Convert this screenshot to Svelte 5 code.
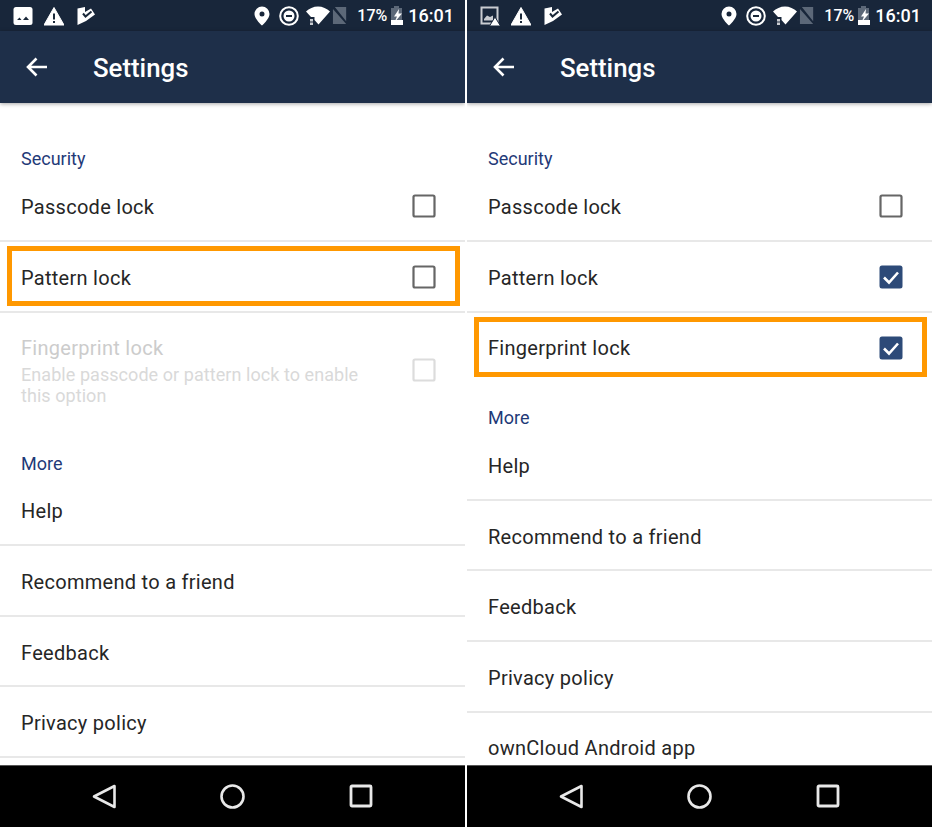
<script>
	const screens = [
		{
			firstIcon: 'image',
			groups: [
				{
					title: 'Security',
					items: [
						{ label: 'Passcode lock', check: 'off' },
						{ label: 'Pattern lock', check: 'off', marked: true },
						{
							label: 'Fingerprint lock',
							check: 'off',
							disabled: true,
							hint: 'Enable passcode or pattern lock to enable this option'
						}
					]
				},
				{
					title: 'More',
					items: [
						{ label: 'Help' },
						{ label: 'Recommend to a friend' },
						{ label: 'Feedback' },
						{ label: 'Privacy policy' }
					]
				}
			]
		},
		{
			firstIcon: 'image-alert',
			groups: [
				{
					title: 'Security',
					items: [
						{ label: 'Passcode lock', check: 'off' },
						{ label: 'Pattern lock', check: 'on' },
						{ label: 'Fingerprint lock', check: 'on', marked: true }
					]
				},
				{
					title: 'More',
					items: [
						{ label: 'Help' },
						{ label: 'Recommend to a friend' },
						{ label: 'Feedback' },
						{ label: 'Privacy policy' },
						{ label: 'ownCloud Android app' }
					]
				}
			]
		}
	];
</script>

<div class="screens">
	{#each screens as screen}
		<section class="phone">
			<div class="status">
				<div class="status-left">
					{#if screen.firstIcon === 'image'}
						<svg class="i20" viewBox="0 0 20 20">
							<rect x="0.5" y="1" width="19" height="18" rx="2.5" fill="#fff" />
							<path d="M4 14l2.5-2.6L8.5 14zM10 14l3-3.4L16 14z" fill="#1a2839" />
						</svg>
					{:else}
						<svg class="i20" viewBox="0 0 20 20">
							<rect x="1.5" y="1.5" width="16" height="16" fill="none" stroke="#c9ccd1" stroke-width="2" />
							<path d="M4 13l3-3.500 3 1.500 3-1.500v5H4z" fill="#c9ccd1" />
							<path d="M15 11l5.500 9h-11z" fill="#fff" stroke="#18263a" />
						</svg>
					{/if}
					<svg class="i20 warn" viewBox="0 0 20 20">
						<path d="M10 1.500L20 19H0z" fill="#fff" stroke="#fff" stroke-linejoin="round" />
						<path d="M9 7.500h2v6H9zM9 15h2v2H9z" fill="#1a2839" />
					</svg>
					<svg class="flag" viewBox="0 0 18 20">
						<path d="M0.500 2.500L8 1v5L14 2.500 18 8.500 9 15 0.500 19z" fill="#fff" />
						<path d="M6 7.500l2.500 3L14.500 5.500" fill="none" stroke="#1a2839" stroke-width="2" />
					</svg>
				</div>
				<div class="status-right">
					<svg class="pin" viewBox="0 0 16 20">
						<path fill-rule="evenodd" d="M8 0.500a7.500 7.500 0 0 0-7.500 7.500C.5 13 8 19.500 8 19.500S15.500 13 15.500 8A7.500 7.500 0 0 0 8 .5zm0 5a2.500 2.500 0 1 1 0 5 2.500 2.500 0 0 1 0-5z" fill="#fff" />
					</svg>
					<svg class="dnd" viewBox="0 0 20 20">
						<circle cx="10" cy="10" r="8.800" fill="none" stroke="#fff" stroke-width="2" />
						<circle cx="10" cy="10" r="5.500" fill="#fff" />
						<rect x="7" y="9" width="6" height="2" fill="#1a2839" />
					</svg>
					<svg class="wifi" viewBox="0 0 24 19">
						<path d="M0 5.500C3 2.500 7.500.5 12 .5s9 2 12 5L12.500 18.500l-4-4.500V11H5z" fill="#fff" />
						<path d="M4 13h3v2.500H4zM4 16.500h3V19H4z" fill="#c9ccd1" />
					</svg>
					<svg class="sim" viewBox="0 0 18 19">
						<path d="M3 .5h12v15zM1 2.500L15 18.500H1z" fill="#5c6878" />
					</svg>
					<span class="percent">17%</span>
					<svg class="battery" viewBox="0 0 13 20">
						<path d="M4 0h5v2h3v12H1V2h3z" fill="#5c6878" />
						<path d="M9 3L4 10.500h3l-1.500 3.500H1v5h12v-5H6.500L12 7.500H8.500z" fill="#fff" />
					</svg>
					<span class="clock">16:01</span>
				</div>
			</div>

			<header class="appbar">
				<svg class="back" viewBox="0 0 22 20" aria-hidden="true">
					<path d="M22 10H3M11.500 1.500L3 10l8.500 8.500" fill="none" stroke="#fff" stroke-width="2.600" />
				</svg>
				<h1>Settings</h1>
			</header>

			<main class="content">
				{#each screen.groups as group}
					<h2>{group.title}</h2>
					<ul>
						{#each group.items as item}
							<li class:disabled={item.disabled} class:tall={item.hint}>
								<div class="text">
									<span class="label">{item.label}</span>
									{#if item.hint}<span class="hint">{item.hint}</span>{/if}
								</div>
								{#if item.check === 'on'}
									<svg class="check" viewBox="0 0 24 24">
										<rect x="0.500" y="0.500" width="23" height="23" rx="2.500" fill="#2d4a78" />
										<path d="M5 12.500l5 5 9-10" fill="none" stroke="#fff" stroke-width="2.600" />
									</svg>
								{:else if item.check === 'off'}
									<svg class="check" viewBox="0 0 24 24">
										<rect x="1.500" y="1.500" width="21" height="21" rx="1.500" fill="none" stroke="currentColor" stroke-width="2.200" />
									</svg>
								{/if}
								{#if item.marked}<div class="mark"></div>{/if}
							</li>
						{/each}
					</ul>
				{/each}
			</main>

			<nav class="navbar">
				<svg viewBox="0 0 25 25">
					<path d="M22.500 2v21L2 12.500z" fill="none" stroke="#e8e8e8" stroke-width="2.600" stroke-linejoin="round" />
				</svg>
				<svg viewBox="0 0 25 25">
					<circle cx="12.500" cy="12.500" r="11" fill="none" stroke="#e8e8e8" stroke-width="2.600" />
				</svg>
				<svg viewBox="0 0 25 25">
					<rect x="3" y="2" width="20" height="20" rx="1" fill="none" stroke="#e8e8e8" stroke-width="2.800" />
				</svg>
			</nav>
		</section>
	{/each}
</div>

<style>
	:global(body) {
		background: #fff;
	}

	.screens {
		display: flex;
		gap: 2px;
		width: 932px;
		height: 827px;
		font-family: Roboto, "Liberation Sans", sans-serif;
	}

	.phone {
		display: flex;
		flex-direction: column;
		width: 465px;
		height: 827px;
		overflow: hidden;
	}

	.status {
		display: flex;
		align-items: center;
		justify-content: space-between;
		flex: none;
		height: 31px;
		padding: 0 11px 0 13px;
		box-sizing: border-box;
		background: #18263a;
		color: #fff;
	}

	.status-left,
	.status-right {
		display: flex;
		align-items: center;
	}

	.i20 {
		width: 20px;
		height: 20px;
	}

	.warn {
		margin-left: 11px;
	}

	.flag {
		width: 18px;
		height: 20px;
		margin-left: 13px;
	}

	.pin {
		width: 16px;
		height: 20px;
	}

	.dnd {
		width: 20px;
		height: 20px;
		margin-left: 9px;
	}

	.wifi {
		width: 24px;
		height: 19px;
		margin-left: 7px;
	}

	.sim {
		width: 17px;
		height: 19px;
		margin-left: 2px;
	}

	.percent {
		margin-left: 8px;
		font-size: 16px;
		font-weight: 500;
	}

	.battery {
		width: 13px;
		height: 20px;
		margin-left: 3px;
	}

	.clock {
		margin-left: 5px;
		font-size: 18px;
		font-weight: 500;
	}

	.appbar {
		display: flex;
		align-items: center;
		flex: none;
		position: relative;
		height: 72px;
		padding-left: 25px;
		box-sizing: border-box;
		background: #1e2f49;
		box-shadow: 0 1px 4px rgba(0, 0, 0, 0.35);
	}

	.back {
		width: 22px;
		height: 20px;
		margin-top: -1px;
	}

	h1 {
		margin: 2px 0 0 46px;
		color: #fff;
		font-size: 25.800px;
		font-weight: 500;
	}

	.content {
		flex: 1;
		min-height: 0;
		overflow: hidden;
		padding-top: 43.400px;
		background: #fff;
	}

	h2 {
		margin: 0;
		padding-left: 21px;
		height: 25px;
		line-height: 25px;
		color: #1f3a78;
		font-size: 18px;
		font-weight: 400;
	}

	ul {
		margin: 0 0 22px;
		padding: 0;
		list-style: none;
	}

	li {
		display: flex;
		align-items: center;
		justify-content: space-between;
		position: relative;
		height: 70.600px;
		padding: 3px 29px 0 21px;
		box-sizing: border-box;
		border-bottom: 2px solid #e8e8e8;
		color: #666;
	}

	ul:first-of-type li:last-child {
		border-bottom-color: transparent;
	}

	li.tall {
		height: 116px;
		align-items: flex-start;
		padding-top: 22.500px;
		color: #dcdcdc;
	}

	li.tall .check {
		margin-top: 23px;
	}

	.text {
		display: flex;
		flex-direction: column;
		max-width: 350px;
	}

	.label {
		color: #262626;
		font-size: 20px;
		letter-spacing: 0.28px;
	}

	.disabled .label {
		color: #ccc;
		line-height: 27px;
	}

	.hint {
		margin-top: 2px;
		color: #d9d9d9;
		font-size: 18px;
		line-height: 21px;
		letter-spacing: 0.06px;
	}

	.check {
		flex: none;
		width: 24px;
		height: 24px;
		margin-top: -1.500px;
	}

	.mark {
		position: absolute;
		top: 4px;
		left: 7px;
		right: 5px;
		height: 60px;
		box-sizing: border-box;
		border: 5px solid #ff9800;
		pointer-events: none;
	}

	.navbar {
		display: flex;
		align-items: center;
		justify-content: center;
		gap: 103px;
		flex: none;
		height: 62px;
		background: #000;
		border-top: 1px solid #555;
		box-sizing: border-box;
	}

	.navbar svg {
		width: 25px;
		height: 25px;
	}
</style>
